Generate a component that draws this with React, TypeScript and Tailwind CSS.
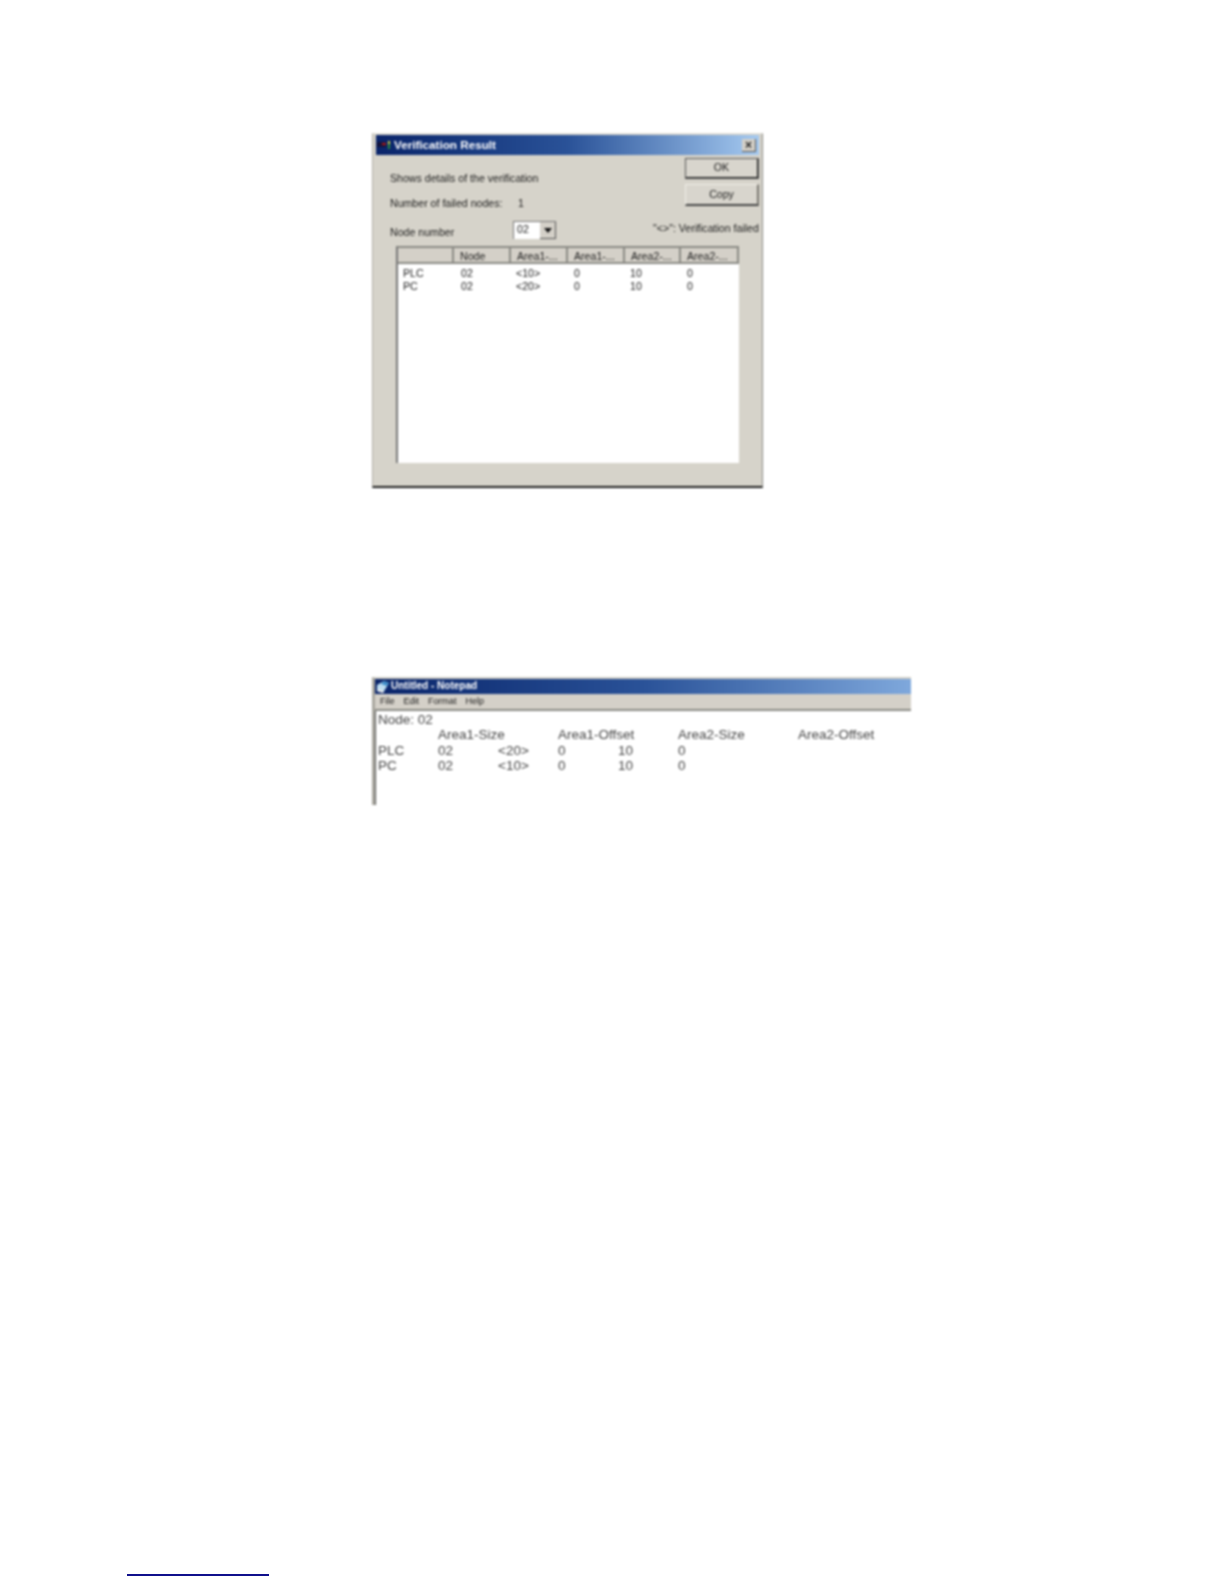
const font = "font-['Liberation_Sans',Arial,sans-serif]";

const listColumns = ["", "Node", "Area1-...", "Area1-...", "Area2-...", "Area2-..."];
const listRows = [
  ["PLC", "02", "<10>", "0", "10", "0"],
  ["PC", "02", "<20>", "0", "10", "0"],
];
const notepadRows = [
  ["PLC", "02", "<20>", "0", "10", "0"],
  ["PC", "02", "<10>", "0", "10", "0"],
];

function DialogIcon() {
  return (
    <svg width="16" height="12" viewBox="0 0 16 12" className="shrink-0">
      <rect x="0" y="3" width="9" height="5" fill="#14143c" />
      <rect x="5" y="4" width="4" height="2" fill="#b01818" />
      <rect x="11" y="2" width="2" height="3" fill="#d8d040" />
      <rect x="11" y="5" width="2" height="5" fill="#2c8a3c" />
    </svg>
  );
}

function NotepadIcon() {
  return (
    <svg width="14" height="14" viewBox="0 0 14 14" className="shrink-0">
      <path d="M1 5 L8 1 L13 3 L7 13 L1 11 Z" fill="#bcdcf0" />
      <path d="M8 1 L13 3 L11 6 L5 4 Z" fill="#3c8cc8" />
      <path d="M1 11 L7 13 L8 11 L2 9 Z" fill="#e8e8e8" />
    </svg>
  );
}

function Dialog() {
  return (
    <div className="w-[391px] h-[355px] bg-[#d6d3ca] border-b-2 border-b-[#1c1c1c] border-r border-r-[#8a8a84] border-l border-l-[#b0aea6] border-t border-t-[#e4e2dc] pt-[1px] text-[10.6px] text-[#1c1c1c] blur-[0.9px]">
      <div className="mx-[3px] h-[20px] flex items-center pl-[1px] pr-[3px] bg-gradient-to-r from-[#0a246a] via-[#2a5298] to-[#a6caf0]">
        <DialogIcon />
        <span className="font-bold text-white text-[11.7px] ml-[1px]">Verification Result</span>
        <span className="ml-auto w-[14px] h-[13px] bg-[#d4d0c8] border-r border-b border-[#555] flex items-center justify-center text-[12px] font-bold leading-none text-[#222]">
          ×
        </span>
      </div>

      <div className="flex h-[51px]">
        <div className="w-[312px] pl-[17px] pt-[16px]">
          <p className="leading-[14px]">Shows details of the verification</p>
          <div className="flex mt-[11px] leading-[14px]">
            <span className="w-[128px]">Number of failed nodes:</span>
            <span>1</span>
          </div>
        </div>
        <div className="w-[74px] pt-[3px]">
          <div className="h-[21px] bg-[#d8d5cd] border border-[#f0eee8] border-r-2 border-b-2 border-r-[#222] border-b-[#222] outline outline-[#555] -outline-offset-1 flex items-center justify-center">
            OK
          </div>
          <div className="mt-[5px] h-[22px] bg-[#d8d5cd] border-t border-l border-[#f0eee8] border-r-2 border-b-2 border-r-[#77756e] border-b-[#444] flex items-center justify-center">
            Copy
          </div>
        </div>
      </div>

      <div className="flex mt-[15px] h-[18px] pl-[17px]">
        <span className="w-[123px] leading-[22px]">Node number</span>
        <div className="w-[43px] bg-white border-t border-l border-[#777] flex justify-between">
          <span className="pl-[3px] leading-[15px]">02</span>
          <span className="w-[16px] h-[17px] bg-[#d4d0c8] border-r border-b border-[#555] flex items-center justify-center">
            <svg width="8" height="5" viewBox="0 0 8 5">
              <path d="M0 0 H8 L4 5 Z" fill="#111" />
            </svg>
          </span>
        </div>
        <span className="ml-[97px] leading-[14px] whitespace-nowrap">"&lt;&gt;": Verification failed</span>
      </div>

      <div className="ml-[23px] mt-[7px] w-[343px] h-[217px] bg-white border-l-2 border-[#777] border-t-2 border-t-[#8a8a84] flex flex-col">
        <div className="grid grid-cols-[56px_57px_57px_57px_56px_58px] h-[16px] bg-[#d4d0c8] border-b-2 border-b-[#8a8a84]">
          {listColumns.map((col, i) => (
            <div key={i} className="border-r-2 border-[#8a8a84] pl-[6px] leading-[16px] whitespace-nowrap overflow-hidden">
              {col}
            </div>
          ))}
        </div>
        <div className="pt-[3px]">
          {listRows.map((row) => (
            <div key={row[0]} className="grid grid-cols-[58px_55px_58px_56px_57px_57px] h-[13px] leading-[13px]">
              {row.map((cell, i) => (
                <div key={i} className="pl-[5px]">
                  {cell}
                </div>
              ))}
            </div>
          ))}
        </div>
      </div>
    </div>
  );
}

function Notepad() {
  return (
    <div className="mt-[189px] w-[539px] h-[128px] bg-white flex flex-col border-t-2 border-t-[#d0cec6] border-l-[3px] border-l-[#a8a69e] blur-[0.9px]">
      <div className="h-[15px] flex items-center bg-gradient-to-r from-[#0a246a] via-[#2a5298] to-[#7fa8dc] pl-[1px] shrink-0">
        <NotepadIcon />
        <span className="font-bold text-white text-[10px] ml-[1px] leading-[12px] mb-[1px]">Untitled - Notepad</span>
      </div>
      <div className="h-[17px] flex items-center gap-[9px] pl-[5px] bg-[#d4d0c8] border-b-2 border-b-[#8a8a84] text-[9px] text-[#1c1c1c] shrink-0">
        <span>File</span>
        <span>Edit</span>
        <span>Format</span>
        <span>Help</span>
      </div>
      <div className="pl-[2px] pt-[1px] text-[13.5px] leading-[15.3px] text-[#444] border-l border-l-[#555] flex-1">
        <p>Node: 02</p>
        <div className="grid grid-cols-[60px_60px_60px_60px_60px_1fr]">
          <span className="col-start-2 col-span-2">Area1-Size</span>
          <span className="col-span-2">Area1-Offset</span>
          <div className="flex">
            <span className="w-[120px]">Area2-Size</span>
            <span>Area2-Offset</span>
          </div>
        </div>
        {notepadRows.map((row) => (
          <div key={row[0]} className="grid grid-cols-[60px_60px_60px_60px_60px_1fr]">
            {row.map((cell, i) => (
              <span key={i}>{cell}</span>
            ))}
          </div>
        ))}
      </div>
    </div>
  );
}

export default function App() {
  return (
    <div className={`${font} w-[1224px] h-[1584px] bg-white pt-[133px] flex flex-col`}>
      <div className="pl-[372px]">
        <Dialog />
        <Notepad />
      </div>
      <div className="mt-auto mb-[8px] ml-[127px] w-[142px] h-[2px] bg-[#10108c]" />
    </div>
  );
}
